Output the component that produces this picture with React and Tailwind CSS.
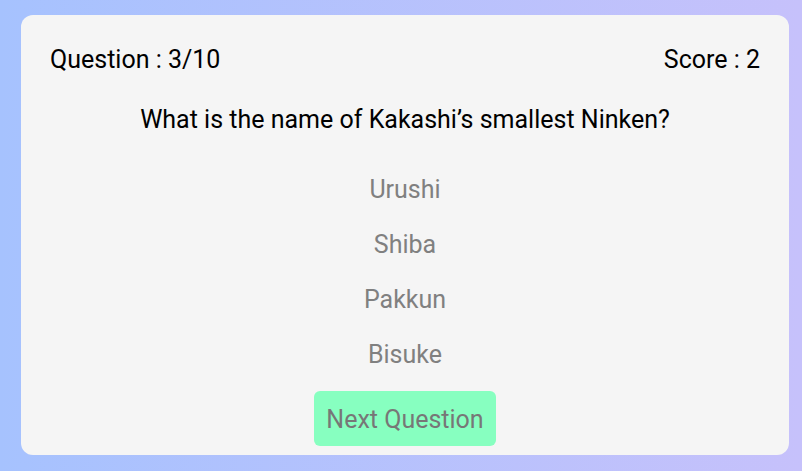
import React, { useState } from 'react';

const options = ['Urushi', 'Shiba', 'Pakkun', 'Bisuke'];

export default function App() {
  const [selected, setSelected] = useState(null);

  return (
    <div className="w-[802px] h-[471px] bg-gradient-to-r from-[#a6c2fe] to-[#c6c1fb] pt-[15px] pl-[21px] font-['Roboto',sans-serif]">
      <div className="w-[768px] h-[440px] bg-[#f5f5f5] rounded-[12px] px-[29px] pt-[30px] flex flex-col items-center">
        <div className="w-full h-[29px] flex justify-between items-center text-[25px] text-black">
          <span>Question : 3/10</span>
          <span>Score : 2</span>
        </div>
        <p className="mt-[31px] text-[25px] leading-[29px] text-black">What is the name of Kakashi’s smallest Ninken?</p>
        <div className="mt-[28px] flex flex-col items-center">
          {options.map((opt) => (
            <button
              key={opt}
              onClick={() => setSelected(opt)}
              className={`h-[55px] flex items-center text-[25px] ${selected === opt ? 'text-black' : 'text-[#808080]'}`}
            >
              {opt}
            </button>
          ))}
        </div>
        <button className="mt-[9px] h-[55px] px-[12px] pt-[2px] rounded-[6px] bg-[#87ffc0] text-[25px] text-[#777777]">
          Next Question
        </button>
      </div>
    </div>
  );
}
